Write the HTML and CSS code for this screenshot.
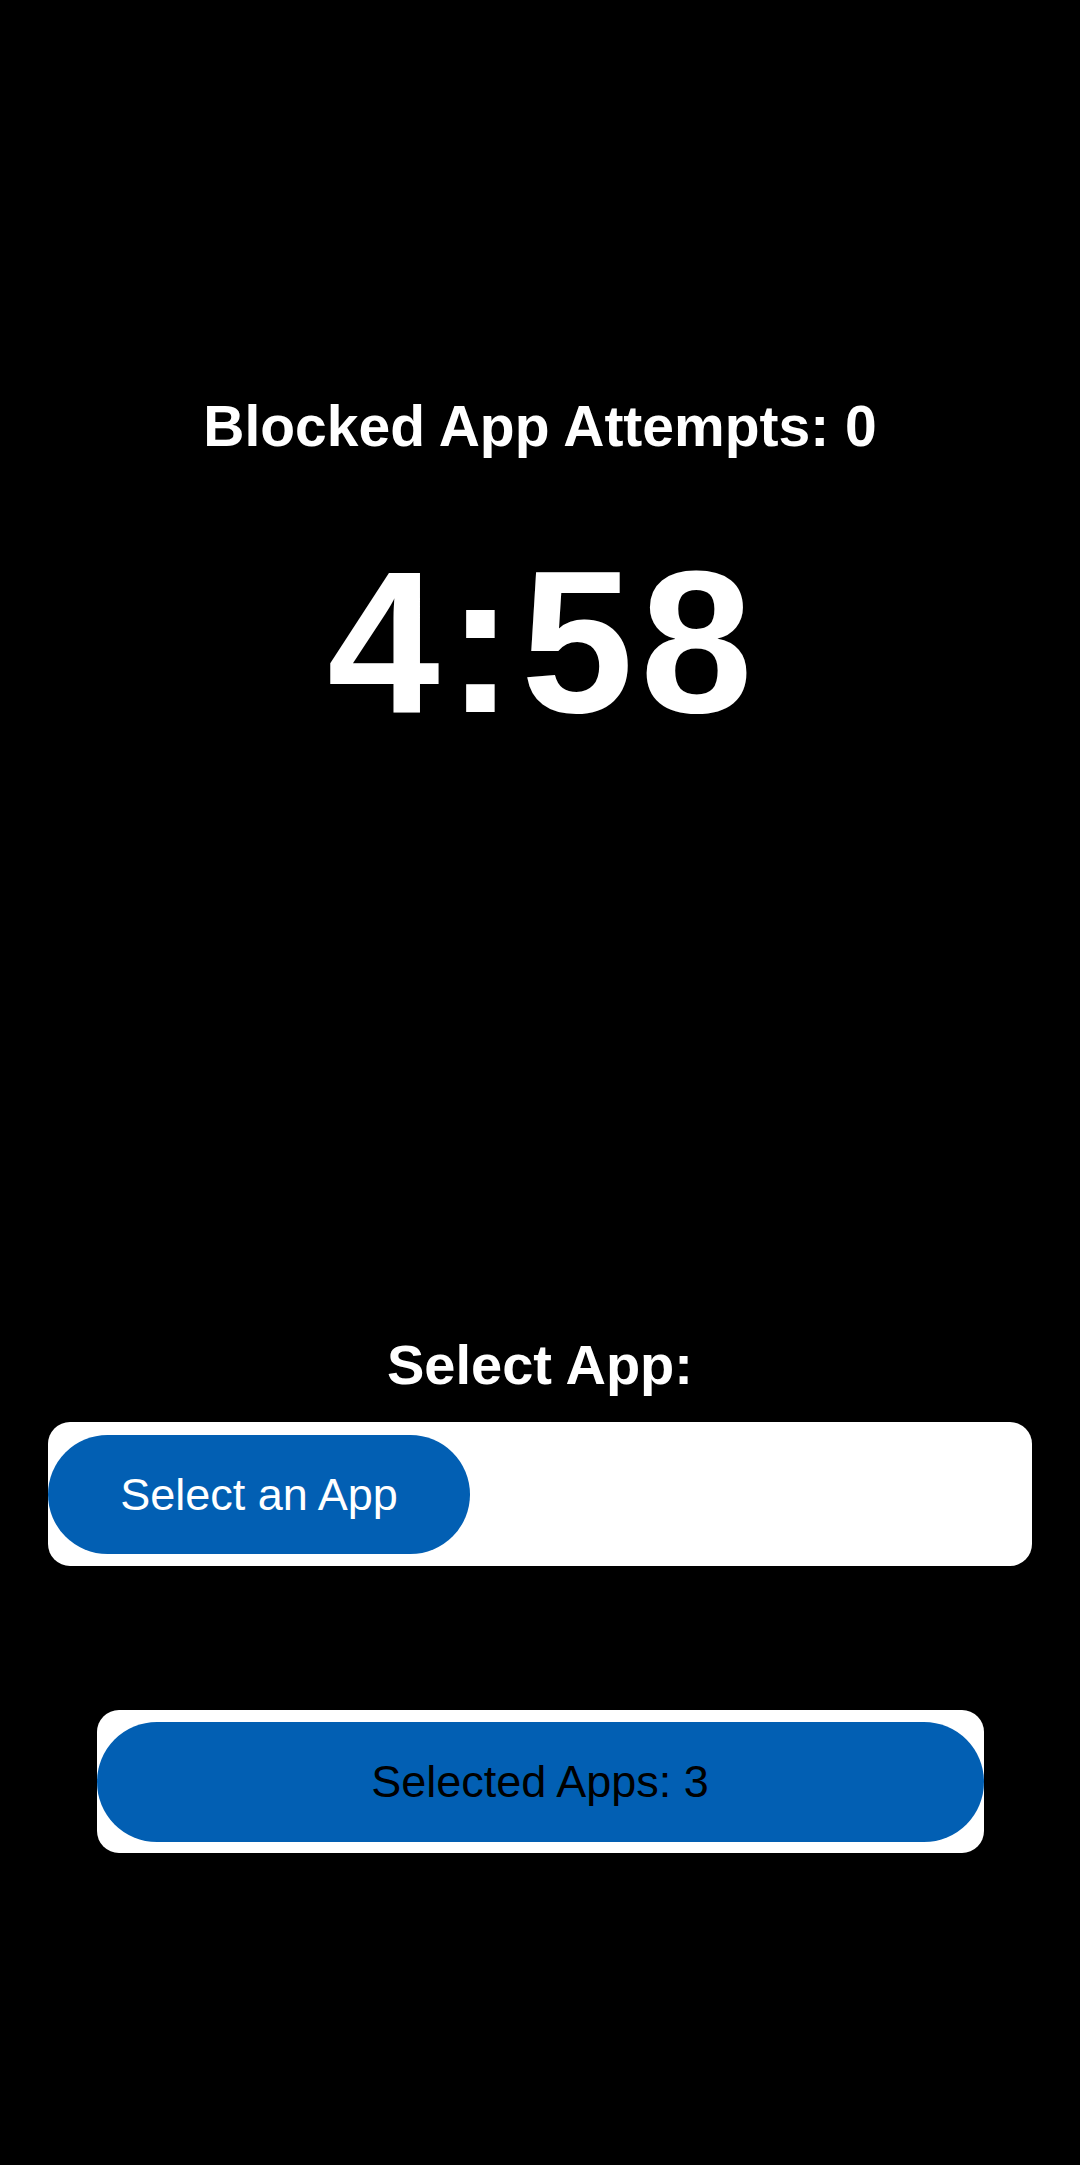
FILE: index.html
```html
<!DOCTYPE html>
<html lang="en">
<head>
<meta charset="utf-8">
<title>Blocker</title>
<link rel="stylesheet" href="styles.css">
</head>
<body>
<main class="screen">
  <h1 class="attempts">Blocked App Attempts: 0</h1>
  <div class="timer">4:58</div>
  <h2 class="select-label">Select App:</h2>
  <div class="picker">
    <button class="pill pill-select">Select an App</button>
  </div>
  <div class="selected">
    <button class="pill pill-selected">Selected Apps: 3</button>
  </div>
</main>
</body>
</html>
```

FILE: styles.css
```css
html, body {
  margin: 0;
  padding: 0;
  background: #000;
}
body {
  width: 1080px;
  height: 2165px;
  overflow: hidden;
  font-family: "Liberation Sans", Arial, sans-serif;
  color: #fff;
}
.screen {
  display: flex;
  flex-direction: column;
  align-items: stretch;
  padding-top: 392px;
}
.attempts {
  margin: 0;
  font-size: 57px;
  line-height: 68px;
  font-weight: 700;
  text-align: center;
}
.timer {
  margin-top: 81px;
  font-size: 202px;
  line-height: 202px;
  font-weight: 700;
  text-align: center;
  letter-spacing: 7px;
  text-indent: 7px;
}
.select-label {
  margin: 588px 0 0;
  font-size: 56px;
  line-height: 68px;
  font-weight: 700;
  text-align: center;
}
.picker {
  margin: 23px 48px 0 48px;
  height: 144px;
  box-sizing: border-box;
  padding: 13px 0 12px;
  background: #fff;
  border-radius: 22px;
  display: flex;
  align-items: stretch;
}
.pill {
  border: none;
  margin: 0;
  background: #025fb3;
  border-radius: 60px;
  font-family: "Liberation Sans", Arial, sans-serif;
  font-size: 45px;
  display: flex;
  align-items: center;
  justify-content: center;
  cursor: pointer;
}
.pill-select {
  width: 422px;
  color: #fff;
  padding: 0;
}
.selected {
  margin: 144px auto 0;
  width: 887px;
  height: 143px;
  box-sizing: border-box;
  padding: 12px 0 11px;
  background: #fff;
  border-radius: 22px;
  display: flex;
  align-items: stretch;
}
.pill-selected {
  flex: 1;
  color: #000;
}
```
